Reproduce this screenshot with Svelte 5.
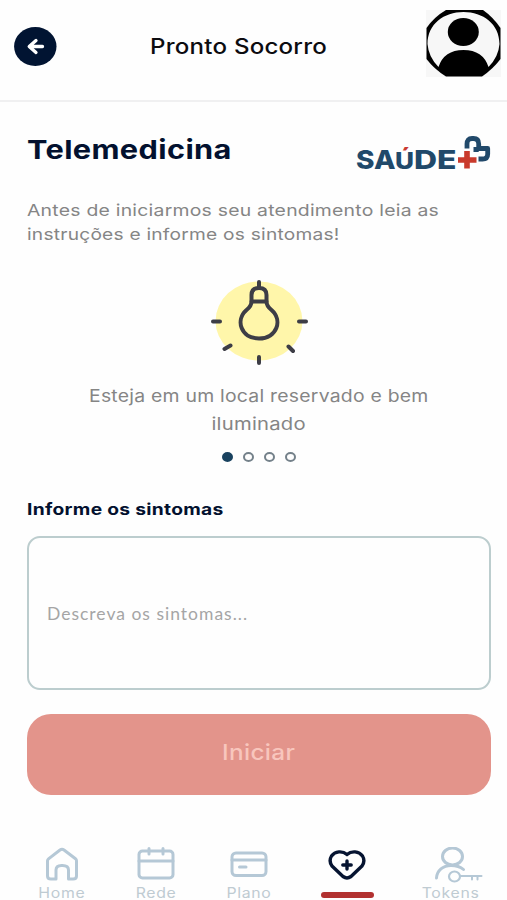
<script>
  const tips = ['Esteja em um local reservado e bem', 'iluminado'];
  const dots = [true, false, false, false];
</script>

<div class="screen">
  <header>
    <button class="back" aria-label="Voltar">
      <svg width="43" height="40" viewBox="0 0 43 40">
        <ellipse cx="21.3" cy="19.5" rx="21.2" ry="19.4" fill="#011432" />
        <path d="M22 13.5 L15.2 19.5 L22 25.5 M15.5 19.5 H28.5" fill="none" stroke="#fff" stroke-width="3.3" stroke-linecap="round" stroke-linejoin="round" />
      </svg>
    </button>
    <h1><span class="fit t-title">Pronto Socorro</span></h1>
    <svg class="avatar" width="75" height="67" viewBox="0 0 75 67">
      <rect width="75" height="67" fill="#f7f7f7" />
      <path d="M20 0 H57 Q67 7 74.500 18 V49 Q67 59 56 66.500 H20 Q8 59 0.500 49 V18 Q8 7 20 0 Z" fill="#000" />
      <path d="M1.500 34 C1.500 14 18 2 37.500 2 S73.500 14 73.500 34 Q72.500 47 62.500 57 Q57 40 37.500 40 Q18 40 12.500 57 Q2.500 47 1.500 34 Z" fill="#f7f7f7" />
      <ellipse cx="37.300" cy="22" rx="15.500" ry="14" fill="#000" />
    </svg>
  </header>

  <main>
    <div class="heading">
      <h2><span class="fit t-h2">Telemedicina</span></h2>
      <svg class="logo" width="136" height="36" viewBox="0 0 136 36">
        <defs>
          <linearGradient id="accent" gradientUnits="userSpaceOnUse" x1="0" y1="0" x2="0" y2="36">
            <stop offset="0.450" stop-color="#c93a32" />
            <stop offset="0.450" stop-color="#21496a" />
          </linearGradient>
        </defs>
        <g class="word" fill="#21496a">
          <text x="1" y="33.500" font-size="26" textLength="39.500" lengthAdjust="spacingAndGlyphs">SA</text>
          <text x="40" y="33.500" font-size="22.500" textLength="19" lengthAdjust="spacingAndGlyphs" fill="url(#accent)">Ú</text>
          <text x="59" y="33.500" font-size="26" textLength="42.500" lengthAdjust="spacingAndGlyphs">DE</text>
        </g>
        <path d="M112 13.500 V9 Q112 3.500 117 3.500 H118.500 Q123.700 3.500 123.700 9 V13.500 H132.700 V19 Q132.700 24 127.500 24 H123.500 M118.500 14.500 L123.700 14.500" fill="none" stroke="#21496a" stroke-width="4.800" stroke-linejoin="round" />
        <path d="M112 16 V33.500 M103 25 H121.500" stroke="#c93a2c" stroke-width="5.600" />
      </svg>
    </div>

    <p class="intro">
      <span class="fit t-i1">Antes de iniciarmos seu atendimento leia as</span>
      <span class="fit t-i2">instruções e informe os sintomas!</span>
    </p>

    <section class="tip">
      <svg width="100" height="88" viewBox="0 0 100 88">
        <ellipse cx="50" cy="42" rx="43.500" ry="39.500" fill="#fff6aa" />
        <g fill="none" stroke="#3d3d46" stroke-width="4" stroke-linecap="round" stroke-linejoin="round">
          <path d="M50 3 V9 M42.500 22.500 V16 Q42.500 9 50 9 T57.500 16 V22.500 Z" />
          <path d="M42.500 22.500 Q42.500 27 37.500 31 C26 41 32 59.500 50 59.500 S74 41 62.500 31 Q57.500 27 57.500 22.500" />
          <path d="M4 42.500 H11 M90 42.500 H97 M50 78 V84 M15.500 70 L21.500 66.500 M79.500 67.500 L84 72" />
        </g>
      </svg>
      <p>
        <span class="fit t-t1">{tips[0]}</span>
        <span class="fit t-t2">{tips[1]}</span>
      </p>
      <div class="dots">
        {#each dots as active}
          <i class:active></i>
        {/each}
      </div>
    </section>

    <label for="symptoms"><span class="fit t-label">Informe os sintomas</span></label>
    <textarea id="symptoms" placeholder="Descreva os sintomas..."></textarea>
    <button class="start"><span class="fit t-start">Iniciar</span></button>
  </main>

  <nav>
    <div class="item">
      <svg width="36" height="36" viewBox="0 0 36 36">
        <path d="M3.500 13.800 Q3.500 12.600 4.500 11.800 L16 3 Q18 1.500 20 3 L31.500 11.800 Q32.500 12.600 32.500 13.800 V29 Q32.500 32 29 32 H24.500 V23 Q24.500 18.500 18.500 18.500 H17.500 Q12 18.500 12 23 V32 H7 Q3.500 32 3.500 29 Z" />
      </svg>
      <span>Home</span>
    </div>
    <div class="item">
      <svg width="38" height="36" viewBox="0 0 38 36">
        <rect x="2" y="4" width="34" height="27" rx="3.500" />
        <path d="M2 14 H36 M12 1.500 V7 M26 1.500 V7" />
      </svg>
      <span>Rede</span>
    </div>
    <div class="item plan">
      <svg width="38" height="36" viewBox="0 0 38 36">
        <rect x="2" y="6" width="34" height="22.500" rx="4" />
        <path d="M2 13 H36 M9.500 20 H16" />
      </svg>
      <span>Plano</span>
    </div>
    <div class="item current">
      <svg width="40" height="36" viewBox="0 0 40 36">
        <path d="M20 7.500 C15.500 3.500 8 4 4.500 9 Q1.500 14 5 19 L16 29.500 Q20 32.300 24 29.500 L35 19 Q38.500 14 35.500 9 C32 4 24.500 3.500 20 7.500 Z" />
        <path d="M20 14 V22 M15.800 18 H24.200" />
      </svg>
      <b></b>
    </div>
    <div class="item tokens">
      <svg width="52" height="36" viewBox="0 0 52 36">
        <ellipse cx="20.500" cy="9.500" rx="10" ry="8.500" />
        <path d="M4.500 31 C5 23.500 11 18.500 19 18.500 Q27 18.500 31.500 22.500" />
        <ellipse cx="22.500" cy="29.500" rx="5.500" ry="5" stroke-width="2.200" />
        <path d="M28 29 H49.500 M40 29 V32.500 M45.500 29 V32.500" stroke-width="2" />
      </svg>
      <span>Tokens</span>
    </div>
  </nav>
</div>

<style>
  :global(body) { margin: 0; background: #fefefe; }
  .screen {
    width: 507px; height: 900px; overflow: hidden; box-sizing: border-box;
    display: flex; flex-direction: column; background: #fefefe;
    font-family: Inter, "Open Sans", sans-serif;
  }
  h1, h2, p { margin: 0; font-weight: inherit; }
  button { border: 0; padding: 0; background: none; font-family: inherit; }
  .fit { display: block; white-space: nowrap; width: max-content; transform-origin: 0 50%; }
  header {
    height: 102px; box-sizing: border-box; border-bottom: 2px solid #f0f0f1; flex: none;
    display: flex; align-items: flex-start; padding: 0 6px 0 14px;
  }
  .back { margin-top: 27px; width: 43px; height: 40px; }
  .back svg, .avatar { display: block; }
  h1 { margin: 32px 0 0 93px; flex: 1; line-height: 30px; }
  .avatar { margin-top: 10px; flex: none; }
  .t-title { font-size: 21px; font-weight: 500; color: #0c0c10; letter-spacing: .2px; transform: scaleX(1.147); }
  main { padding: 0 16px 0 27px; display: flex; flex-direction: column; flex: none; }
  .heading { display: flex; justify-content: space-between; height: 70px; margin-top: 33px; }
  h2 { line-height: 30px; }
  .t-h2 { font-size: 26px; font-weight: 700; color: #03112f; letter-spacing: .3px; transform: scaleX(1.182); }
  .logo { font-family: Inter, sans-serif; font-weight: 800; overflow: visible; }
  .intro { margin-top: -7px; line-height: 24px; font-size: 16.500px; color: #858585; }
  .t-i1 { letter-spacing: .2px; transform: scaleX(1.175); }
  .t-i2 { letter-spacing: .2px; transform: scaleX(1.16); }
  .tip { display: flex; flex-direction: column; align-items: center; margin-top: 33px; }
  .tip svg { display: block; }
  .tip p { width: 100%; display: flex; flex-direction: column; align-items: center; margin-top: 15px; line-height: 28px; font-size: 17px; color: #858585; }
  .t-t1, .t-t2 { transform-origin: 50% 50%; letter-spacing: .2px; transform: scaleX(1.141); }
  .t-t2 { transform: scaleX(1.19); }
  .dots { display: flex; gap: 10px; margin-top: 14px; }
  .dots i { width: 11px; height: 10px; box-sizing: border-box; border: 2px solid #74818a; border-radius: 50%; }
  .dots .active { background: #19425f; border-color: #19425f; }
  label { margin-top: 34px; line-height: 26px; }
  .t-label { font-size: 16px; font-weight: 700; color: #03112f; letter-spacing: .25px; transform: scaleX(1.2); }
  textarea {
    margin-top: 14px; height: 154px; box-sizing: border-box; resize: none; display: block;
    border: 2px solid #bccdce; border-radius: 13px; background: #fefefe; padding: 63px 18px 0;
    font: 17.500px/26px Lato, sans-serif; letter-spacing: 1px; outline: none; overflow: hidden;
  }
  textarea::placeholder { color: #a5a5a5; opacity: 1; }
  .start {
    margin-top: 24px; height: 81px; border-radius: 24px; background: #e3948b; color: #f8c6bd;
    display: flex; align-items: center; justify-content: center; padding-bottom: 4px;
  }
  .t-start { font-size: 21px; font-weight: 500; transform-origin: 50% 50%; letter-spacing: .3px; transform: scaleX(1.16); }
  nav { display: flex; padding-left: 15px; margin-top: 52px; }
  .item { width: 94px; display: flex; flex-direction: column; align-items: center; color: #bfcbd2; font-size: 14px; line-height: 20px; }
  .plan { width: 92px; }
  .current, .tokens { width: 104px; }
  .item svg { display: block; fill: none; stroke: #b5c8d6; stroke-width: 3; stroke-linecap: round; stroke-linejoin: round; }
  .tokens svg { margin-left: 14px; }
  .item span { letter-spacing: .6px; margin-top: 0; transform: scaleX(1.13); }
  .current svg { stroke: #061431; stroke-width: 3.400; }
  .current b { width: 53px; height: 6px; border-radius: 3px; background: #b23130; margin-top: 9px; }
</style>
